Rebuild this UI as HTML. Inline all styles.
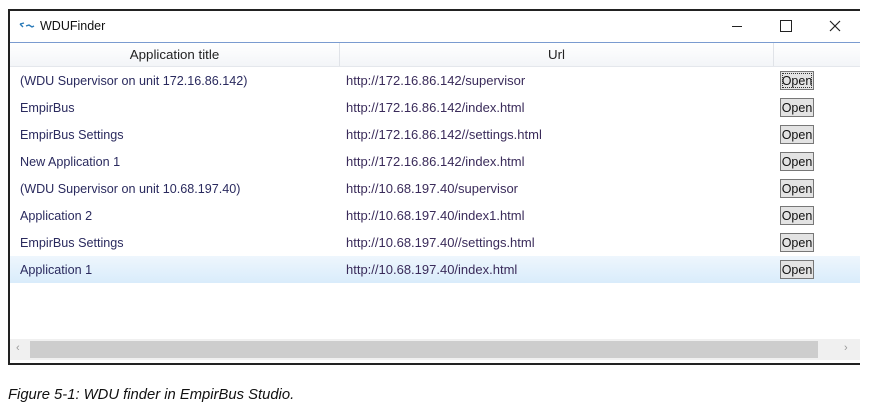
<!DOCTYPE html>
<html><head><style>
body{margin:0;width:876px;height:412px;background:#fff;position:relative;overflow:hidden;font-family:"Liberation Sans",sans-serif;}
.win{position:absolute;left:8px;top:9px;width:850px;height:352px;border-left:2px solid #222;border-top:2px solid #222;border-bottom:2px solid #222;background:#fff;overflow:hidden;}
.title{position:absolute;left:0;top:0;right:0;height:31px;border-bottom:1px solid #7a9bd0;}
.title span{position:absolute;left:30px;top:8px;font-size:12.5px;color:#111;}
.hdr{position:absolute;top:32px;left:0;right:0;height:23px;background:linear-gradient(#fff,#f3f5f8);border-bottom:1px solid #e4e7ec;font-size:13.3px;color:#222;}
.hdr div{position:absolute;top:4px;text-align:center;}
.row{position:absolute;left:0;right:0;height:27px;font-size:12.6px;color:#2a2a5e;}
.row .a{position:absolute;left:10px;top:7px;}
.row .u{position:absolute;left:336px;top:6px;color:#3a2b5a;font-size:13px;}
.btn{position:absolute;left:770px;top:4px;width:34px;height:19px;border:1px solid #777;background:#e3e3e3;font-size:12.5px;color:#111;text-align:center;line-height:18px;box-sizing:border-box;}
.sel{background:linear-gradient(#eef6fd,#d9ecfb);}
.sb{position:absolute;left:0;right:0;top:328px;height:21px;background:#f0f0f0;}
.thumb{position:absolute;left:20px;top:2px;width:788px;height:17px;background:#cdcdcd;}
.cap{position:absolute;left:8px;top:387px;font-size:14.8px;font-style:italic;color:#111;}
</style></head><body>
<div class="win">
 <div class="title">
  <svg style="position:absolute;left:9px;top:11px" width="16" height="8"><path d="M1 2 L5 1 M1 2 L4 5 M7 4 L10 3 L13 5 L15 4" stroke="#2a7ab8" stroke-width="1.4" fill="none"/></svg>
  <span>WDUFinder</span>
  <div style="position:absolute;left:722px;top:15px;width:10px;height:1px;background:#222"></div>
  <div style="position:absolute;left:770px;top:9px;width:10px;height:10px;border:1px solid #222"></div>
  <svg style="position:absolute;left:819px;top:9px" width="12" height="12"><path d="M1 1L11 11M11 1L1 11" stroke="#222" stroke-width="1.2"/></svg>
 </div>
 <div class="hdr">
  <div style="left:0;width:329px">Application title</div>
  <div style="left:330px;width:433px">Url</div>
  <span style="position:absolute;left:329px;top:0;width:1px;height:23px;background:#e0e3e8"></span>
  <span style="position:absolute;left:763px;top:0;width:1px;height:23px;background:#e0e3e8"></span>
 </div>
 <div class="row" style="top:56px"><span class="a">(WDU Supervisor on unit 172.16.86.142)</span><span class="u">http://172.16.86.142/supervisor</span><div class="btn" style="outline:1px dotted #333;outline-offset:-3px">Open</div></div>
 <div class="row" style="top:83px"><span class="a">EmpirBus</span><span class="u">http://172.16.86.142/index.html</span><div class="btn">Open</div></div>
 <div class="row" style="top:110px"><span class="a">EmpirBus Settings</span><span class="u">http://172.16.86.142//settings.html</span><div class="btn">Open</div></div>
 <div class="row" style="top:137px"><span class="a">New Application 1</span><span class="u">http://172.16.86.142/index.html</span><div class="btn">Open</div></div>
 <div class="row" style="top:164px"><span class="a">(WDU Supervisor on unit 10.68.197.40)</span><span class="u">http://10.68.197.40/supervisor</span><div class="btn">Open</div></div>
 <div class="row" style="top:191px"><span class="a">Application 2</span><span class="u">http://10.68.197.40/index1.html</span><div class="btn">Open</div></div>
 <div class="row" style="top:218px"><span class="a">EmpirBus Settings</span><span class="u">http://10.68.197.40//settings.html</span><div class="btn">Open</div></div>
 <div class="row sel" style="top:245px"><span class="a">Application 1</span><span class="u">http://10.68.197.40/index.html</span><div class="btn">Open</div></div>
 <div class="sb"><div class="thumb"></div><span style="position:absolute;left:6px;top:3px;font-size:11px;color:#999">‹</span><span style="position:absolute;left:834px;top:3px;font-size:11px;color:#999">›</span></div>
</div>
<div class="cap">Figure 5-1: WDU finder in EmpirBus Studio.</div>
</body></html>
